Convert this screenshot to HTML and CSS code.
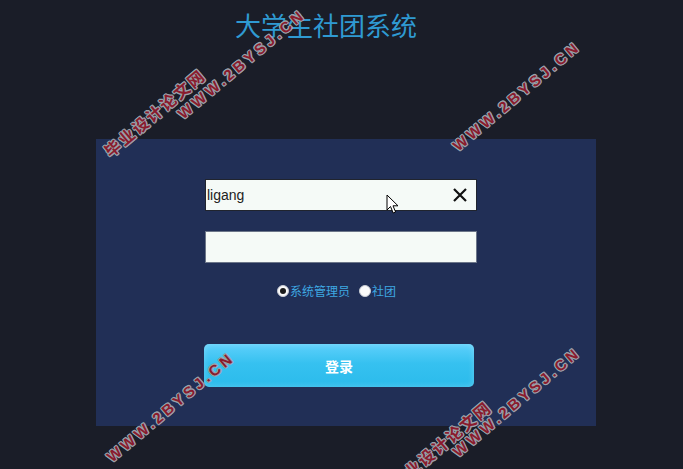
FILE: index.html
```html
<!DOCTYPE html>
<html lang="zh-CN">
<head>
<meta charset="utf-8">
<title>大学生社团系统</title>
<link rel="stylesheet" href="styles.css">
</head>
<body>
<div class="page">
  <header class="header"><h1 class="title">大学生社团系统</h1></header>
  <main class="panel">
    <form class="form">
      <div class="field field-user">
        <span class="field-text">ligang</span>
        <svg class="clear" width="16" height="16" viewBox="0 0 16 16"><path d="M2 2L14 14M14 2L2 14" stroke="#111" stroke-width="2.2" fill="none"/></svg>
      </div>
      <div class="field field-pass"></div>
      <div class="roles">
        <span class="radio radio-on"></span><span class="role-label">系统管理员</span>
        <span class="radio radio-off"></span><span class="role-label">社团</span>
      </div>
      <div class="btn">登录</div>
    </form>
  </main>
</div>
<svg class="cursor" width="13" height="21" viewBox="0 0 13 21"><path d="M1 1L1 16L4.5 12.5L7.2 19L9.6 18L7 11.8L12 11.8Z" fill="#fff" stroke="#000" stroke-width="1" stroke-linejoin="round"/></svg>
<div class="overlay">
  <div class="wm wm-cn wm1">毕业设计论文网</div>
  <div class="wm wm2">WWW.2BYSJ.CN</div>
  <div class="wm wm3">WWW.2BYSJ.CN</div>
  <div class="wm wm4">WWW.2BYSJ.CN</div>
  <div class="wm wm5">WWW.2BYSJ.CN</div>
  <div class="wm wm-cn wm6">毕业设计论文网</div>
</div>
</body>
</html>
```
FILE: styles.css
```css
html, body {
  margin: 0;
  padding: 0;
}
body {
  background: #1a1d28;
  width: 683px;
  height: 469px;
  overflow: hidden;
  position: relative;
  font-family: "Liberation Sans", "Noto Sans CJK SC", sans-serif;
}
.page {
  display: flex;
  flex-direction: column;
}
.header {
  height: 50px;
  padding-right: 31px;
  text-align: center;
}
.title {
  margin: 0;
  font-family: "Noto Sans CJK SC", sans-serif;
  font-weight: normal;
  font-size: 26px;
  line-height: 50px;
  color: #2f9ad2;
}
.panel {
  margin-top: 89px;
  margin-left: 96px;
  width: 500px;
  height: 287px;
  background: #212f56;
  box-sizing: border-box;
  padding: 40px 0 0 109px;
}
.form {
  display: flex;
  flex-direction: column;
  width: 272px;
}
.field {
  height: 32px;
  box-sizing: border-box;
  background: #f5faf7;
  display: flex;
  align-items: center;
  justify-content: space-between;
}
.field-user {
  border: 1px solid #20242e;
  padding: 0 8px 0 1px;
}
.field-pass {
  margin-top: 20px;
  border: 1px solid #6c7689;
}
.field-text {
  font-family: "Liberation Sans", sans-serif;
  font-size: 14px;
  color: #222;
}
.roles {
  margin-top: 20px;
  height: 16px;
  display: flex;
  align-items: center;
  padding-left: 72px;
}
.radio {
  width: 12px;
  height: 12px;
  border-radius: 50%;
  background: #fafafa;
  box-sizing: border-box;
  border: 1px solid #c8ccd4;
  position: relative;
}
.radio-on::after {
  content: "";
  position: absolute;
  left: 2px;
  top: 2px;
  width: 6px;
  height: 6px;
  border-radius: 50%;
  background: #1b1b1b;
}
.radio-off {
  margin-left: 9px;
}
.role-label {
  font-family: "Noto Sans CJK SC", sans-serif;
  font-size: 12px;
  color: #3ea8e2;
  margin-left: 1px;
  line-height: 16px;
}
.btn {
  margin-top: 45px;
  margin-left: -1px;
  width: 270px;
  height: 43px;
  border-radius: 5px;
  background: linear-gradient(#5ed0fb, #36c1f0 45%, #2bbbeb);
  box-shadow: inset 0 0 6px rgba(255,255,255,0.25);
  color: #fff;
  font-family: "Noto Sans CJK SC", sans-serif;
  font-weight: bold;
  font-size: 14px;
  display: flex;
  align-items: center;
  justify-content: center;
}
.cursor {
  position: absolute;
  left: 386px;
  top: 194px;
}
.overlay {
  position: absolute;
  left: 0;
  top: 0;
  width: 683px;
  height: 469px;
  overflow: hidden;
  pointer-events: none;
}
.wm {
  position: absolute;
  white-space: nowrap;
  font-family: "Liberation Sans", sans-serif;
  font-weight: bold;
  font-size: 15px;
  line-height: 16px;
  letter-spacing: 3.5px;
  color: #8a1b2d;
  transform-origin: 0 50%;
  transform: rotate(-40deg);
  text-shadow: 1px 0 #9aa0aa, -1px 0 #9aa0aa, 0 1px #9aa0aa, 0 -1px #9aa0aa,
    1px 1px #9aa0aa, -1px -1px #9aa0aa, 1px -1px #9aa0aa, -1px 1px #9aa0aa;
}
.wm-cn {
  font-family: "Noto Sans CJK SC", sans-serif;
  font-size: 16px;
  letter-spacing: 2px;
}
.wm1 { left: 106px; top: 145px; }
.wm2 { left: 180px; top: 108px; }
.wm3 { left: 455px; top: 140px; }
.wm4 { left: 109px; top: 451px; }
.wm5 { left: 455px; top: 446px; }
.wm6 { left: 392px; top: 477px; }
```
